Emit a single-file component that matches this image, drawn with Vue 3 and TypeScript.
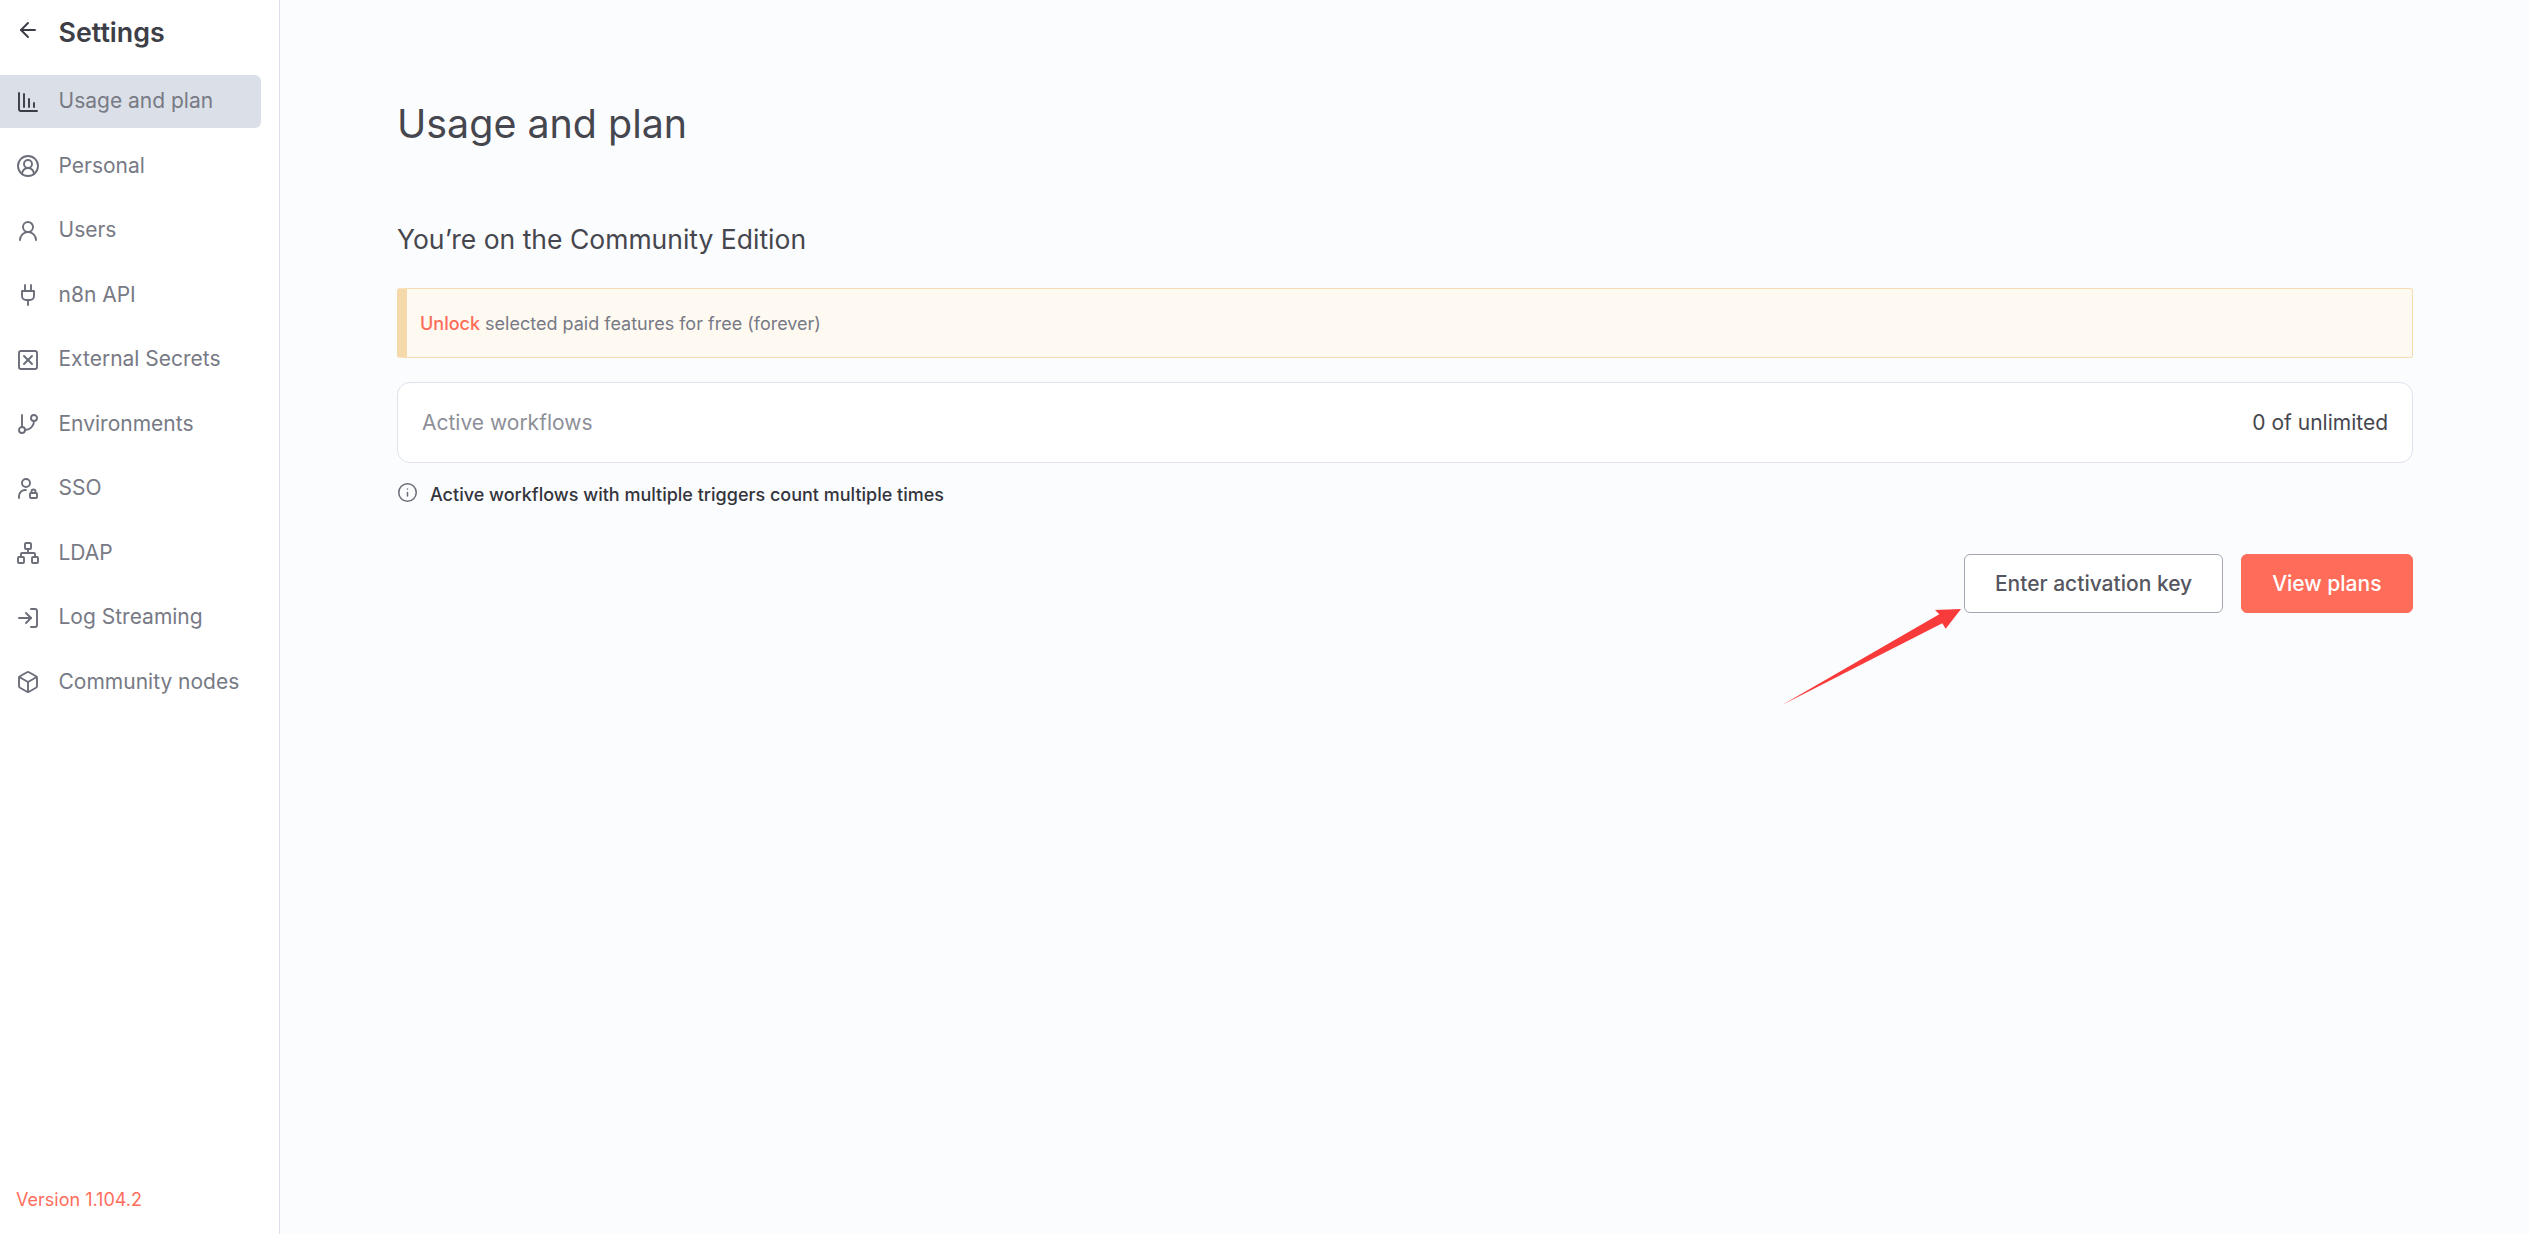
<script setup lang="ts">
interface NavItem {
  label: string
  paths: string[]
  active?: boolean
}

const items: NavItem[] = [
  { label: 'Usage and plan', active: true, paths: ['M3 3v16a2 2 0 0 0 2 2h16', 'M8 17V4', 'M13 17V9', 'M18 17v-4'] },
  { label: 'Personal', paths: ['M18 20a6 6 0 0 0-12 0', 'M12 6a4 4 0 1 0 0 8 4 4 0 0 0 0-8z', 'M12 2a10 10 0 1 0 0 20 10 10 0 0 0 0-20z'] },
  { label: 'Users', paths: ['M12 13a5 5 0 1 0 0-10 5 5 0 0 0 0 10z', 'M20 21a8 8 0 0 0-16 0'] },
  { label: 'n8n API', paths: ['M12 22v-5', 'M9 8V2', 'M15 8V2', 'M18 8v5a4 4 0 0 1-4 4h-4a4 4 0 0 1-4-4V8z'] },
  { label: 'External Secrets', paths: ['M5 3h14a2 2 0 0 1 2 2v14a2 2 0 0 1-2 2H5a2 2 0 0 1-2-2V5a2 2 0 0 1 2-2z', 'M8 8l8 8', 'M16 8l-8 8'] },
  { label: 'Environments', paths: ['M6 3v12', 'M18 3a3 3 0 1 0 0 6 3 3 0 0 0 0-6z', 'M6 15a3 3 0 1 0 0 6 3 3 0 0 0 0-6z', 'M18 9a9 9 0 0 1-9 9'] },
  { label: 'SSO', paths: ['M10 10a4 4 0 1 0 0-8 4 4 0 0 0 0 8z', 'M3 21v-2a6 6 0 0 1 7-5.9', 'M15 16h5a1 1 0 0 1 1 1v3a1 1 0 0 1-1 1h-5a1 1 0 0 1-1-1v-3a1 1 0 0 1 1-1z', 'M15.5 16v-1.5a2 2 0 0 1 4 0V16'] },
  { label: 'LDAP', paths: ['M10 2h4a1 1 0 0 1 1 1v4a1 1 0 0 1-1 1h-4a1 1 0 0 1-1-1V3a1 1 0 0 1 1-1z', 'M3 16h4a1 1 0 0 1 1 1v4a1 1 0 0 1-1 1H3a1 1 0 0 1-1-1v-4a1 1 0 0 1 1-1z', 'M17 16h4a1 1 0 0 1 1 1v4a1 1 0 0 1-1 1h-4a1 1 0 0 1-1-1v-4a1 1 0 0 1 1-1z', 'M5 16v-3a1 1 0 0 1 1-1h12a1 1 0 0 1 1 1v3', 'M12 12V8'] },
  { label: 'Log Streaming', paths: ['M15 3h4a2 2 0 0 1 2 2v14a2 2 0 0 1-2 2h-4', 'M10 17l5-5-5-5', 'M15 12H3'] },
  { label: 'Community nodes', paths: ['M21 8a2 2 0 0 0-1-1.73l-7-4a2 2 0 0 0-2 0l-7 4A2 2 0 0 0 3 8v8a2 2 0 0 0 1 1.73l7 4a2 2 0 0 0 2 0l7-4A2 2 0 0 0 21 16z', 'M12 22V12', 'M3.3 7 12 12l8.7-5'] }
]
</script>

<template>
  <div class="layout">
    <aside class="sidebar">
      <div class="head">
        <svg class="back" viewBox="0 0 24 24"><path d="M19 12H5" /><path d="M12 19l-7-7 7-7" /></svg>
        <span class="head-title">Settings</span>
      </div>
      <nav class="nav">
        <a v-for="item in items" :key="item.label" class="nav-item" :class="{ active: item.active }">
          <svg class="nav-icon" viewBox="0 0 24 24"><path v-for="p in item.paths" :key="p" :d="p" /></svg>
          <span class="nav-label">{{ item.label }}</span>
        </a>
      </nav>
      <div class="version">Version 1.104.2</div>
    </aside>
    <main class="main">
      <h1 class="title">Usage and plan</h1>
      <h2 class="subtitle">You’re on the Community Edition</h2>
      <div class="banner"><a class="unlock">Unlock</a>&nbsp;selected paid features for free (forever)</div>
      <div class="card">
        <span class="card-label">Active workflows</span>
        <span class="card-value">0 of unlimited</span>
      </div>
      <div class="note">
        <svg class="note-icon" viewBox="0 0 24 24"><circle cx="12" cy="12" r="10" /><path d="M12 16v-4" /><path d="M12 8h.01" /></svg>
        <span>Active workflows with multiple triggers count multiple times</span>
      </div>
      <div class="actions">
        <button class="btn secondary">Enter activation key</button>
        <button class="btn primary">View plans</button>
      </div>
    </main>
    <svg class="annotation" viewBox="0 0 200 110" aria-hidden="true">
      <polygon points="0,96 157.3,5.3 153,1 179,0 163.7,19.7 160.3,14.3" />
    </svg>
  </div>
</template>

<style>
html, body { margin: 0; padding: 0; }
</style>

<style scoped>
.layout {
  position: relative;
  display: flex;
  width: 2529px;
  height: 1234px;
  overflow: hidden;
  background: #fbfcfe;
  font-family: Inter, "Liberation Sans", sans-serif;
}
.sidebar {
  box-sizing: border-box;
  width: 280px;
  height: 100%;
  flex: none;
  display: flex;
  flex-direction: column;
  background: #fff;
  border-right: 1px solid #dbdfe7;
}
.head {
  height: 75px;
  display: flex;
  align-items: flex-start;
  padding-top: 15px;
  box-sizing: border-box;
}
.back {
  width: 24px;
  height: 24px;
  margin: 3px 18.5px 0 16px;
  fill: none;
  stroke: #3a3c46;
  stroke-width: 1.9;
  stroke-linecap: round;
  stroke-linejoin: round;
}
.head-title {
  margin-top: -1px;
  font-size: 26.8px;
  line-height: 36px;
  font-weight: 600;
  color: #3d3e46;
}
.nav {
  display: flex;
  flex-direction: column;
  gap: 11.5px;
  flex: 1;
}
.nav-item {
  box-sizing: border-box;
  width: 261px;
  height: 53px;
  display: flex;
  align-items: center;
  border-radius: 0 6px 6px 0;
  font-size: 21px;
  color: #777a85;
}
.nav-label { margin-top: -2px; }
.nav-item.active {
  background: #dbdfe7;
  border-radius: 0 6px 6px 0;
}
.nav-icon {
  width: 24px;
  height: 24px;
  flex: none;
  margin: 0 18.5px 0 16px;
  fill: none;
  stroke: #6b6e78;
  stroke-width: 1.9;
  stroke-linecap: round;
  stroke-linejoin: round;
}
.nav-item.active .nav-icon { stroke: #3a3c46; }
.version {
  padding: 0 0 22px 16px;
  font-size: 18px;
  line-height: 24px;
  color: #ff6d5a;
}
.main {
  flex: 1;
  min-width: 0;
  padding: 98px 116px 0 117px;
  box-sizing: border-box;
}
.title {
  margin: 0;
  font-size: 39.4px;
  line-height: 52px;
  font-weight: 400;
  color: #45464e;
}
.subtitle {
  margin: 71px 0 0;
  font-size: 26.5px;
  line-height: 36px;
  font-weight: 400;
  color: #45464e;
}
.banner {
  box-sizing: border-box;
  margin-top: 31px;
  height: 70px;
  display: flex;
  align-items: center;
  padding-left: 13px;
  background: #fef9f1;
  border: 1px solid #f6dcb0;
  border-left: 10px solid #f6d9ab;
  border-radius: 3px;
  font-size: 18px;
  color: #777a85;
}
.unlock { color: #ff6d5a; font-weight: 500; }
.card {
  box-sizing: border-box;
  margin-top: 24px;
  height: 81px;
  display: flex;
  align-items: center;
  justify-content: space-between;
  padding: 0 24px;
  background: #fff;
  border: 1px solid #dfe1ee;
  border-radius: 13px;
}
.card-label { font-size: 21px; color: #8d9099; }
.card-value { font-size: 21px; color: #45464e; }
.note {
  margin-top: 15px;
  display: flex;
  align-items: center;
  height: 32px;
  font-size: 18px;
  font-weight: 500;
  color: #33343c;
}
.note-icon {
  width: 21px;
  height: 21px;
  flex: none;
  margin: -3px 12px 0 0;
  fill: none;
  stroke: #6b6e78;
  stroke-width: 1.75;
  stroke-linecap: round;
  stroke-linejoin: round;
}
.actions {
  margin-top: 44px;
  display: flex;
  justify-content: flex-end;
  gap: 18px;
}
.btn {
  box-sizing: border-box;
  height: 59px;
  border-radius: 6px;
  font-family: inherit;
  font-size: 21px;
  font-weight: 500;
}
.secondary {
  padding: 0 29.5px;
  background: #fff;
  border: 1px solid #a3a6b2;
  color: #555660;
}
.primary {
  padding: 0 30.5px;
  background: #ff6d5a;
  border: 1px solid #ff6d5a;
  color: #fff;
}
.annotation {
  position: absolute;
  left: 1782px;
  top: 609px;
  width: 200px;
  height: 110px;
  fill: #f93a3a;
}
</style>
